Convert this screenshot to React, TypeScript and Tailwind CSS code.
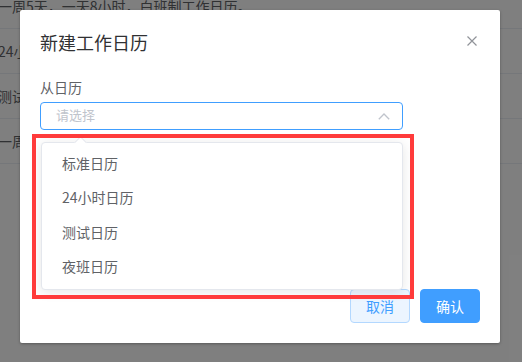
import React from "react";

const rows = [
  "一周5天，一天8小时，白班制工作日历。",
  "24小时日历，一天24小时工作。",
  "测试日历，用于测试。",
  "一周5天，一天8小时，夜班制工作日历。",
];

const options = ["标准日历", "24小时日历", "测试日历", "夜班日历"];

export default function App() {
  return (
    <div className="relative w-[522px] h-[362px] overflow-hidden bg-white font-['Noto_Sans_CJK_SC','Noto_Sans',sans-serif]">
      {/* background table */}
      <div className="mt-[-16px] flex flex-col">
        {rows.map((r) => (
          <div
            key={r}
            className="h-[45px] border-b border-[#ebeef5] flex items-center pl-0 ml-[-2px] text-[14px] text-[#606266] whitespace-nowrap"
          >
            {r}
          </div>
        ))}
      </div>

      {/* overlay */}
      <div className="absolute inset-0 bg-black/50" />

      {/* modal */}
      <div className="absolute left-[20px] top-[10px] w-[480px] h-[333px] bg-white rounded-[2px] shadow-[0_1px_3px_rgba(0,0,0,0.3)] flex flex-col">
        <div className="pt-5 px-5 h-6 box-content leading-6 text-[18px] text-[#303133]">
          新建工作日历
        </div>
        <button className="absolute right-[23px] top-[26px] w-[10px] h-[10px] flex items-center justify-center">
          <svg width="10" height="10" viewBox="0 0 10 10">
            <path d="M0.5 0.5 L9.5 9.5 M9.5 0.5 L0.5 9.5" stroke="#909399" strokeWidth="1.2" fill="none" />
          </svg>
        </button>

        <div className="px-5 mt-[23px]">
          <div className="h-5 leading-5 text-[14px] text-[#606266]">从日历</div>
          <div className="mt-[5px] w-[363px] h-[28px] border border-[#409eff] rounded-[4px] flex items-center justify-between pl-[15px] pr-[12px]">
            <span className="text-[13px] leading-[26px] -mt-[2px] text-[#c0c4cc]">请选择</span>
            <svg width="12" height="7" viewBox="0 0 12 7">
              <path d="M0.8 6.2 L6 1 L11.2 6.2" stroke="#c0c4cc" strokeWidth="1.3" fill="none" />
            </svg>
          </div>
        </div>

        <div className="mt-auto flex justify-end gap-[10px] pr-5 pb-5">
          <button className="w-[60px] h-[34px] rounded-[4px] border border-[#b3d8ff] bg-[#ecf5ff] text-[#409eff] text-[14px]">
            取消
          </button>
          <button className="w-[60px] h-[34px] rounded-[4px] border border-[#409eff] bg-[#409eff] text-white text-[14px]">
            确认
          </button>
        </div>

        {/* dropdown */}
        <div className="absolute left-[21px] top-[132px] w-[362px] h-[148px] bg-white border border-[#e4e7ed] rounded-[4px] shadow-[0_2px_12px_rgba(0,0,0,0.1)] pt-[3px]">
          <div className="absolute left-[34px] top-[-5px] w-[9px] h-[9px] bg-white border-l border-t border-[#e4e7ed] rotate-45" />
          {options.map((o) => (
            <div key={o} className="h-[34.3px] leading-[34px] px-5 text-[14px] text-[#606266]">
              {o}
            </div>
          ))}
        </div>

        {/* highlight */}
        <div className="absolute left-[12px] top-[124px] w-[382px] h-[165px] border-[4px] border-[#ff3b3b] pointer-events-none" />
      </div>
    </div>
  );
}
